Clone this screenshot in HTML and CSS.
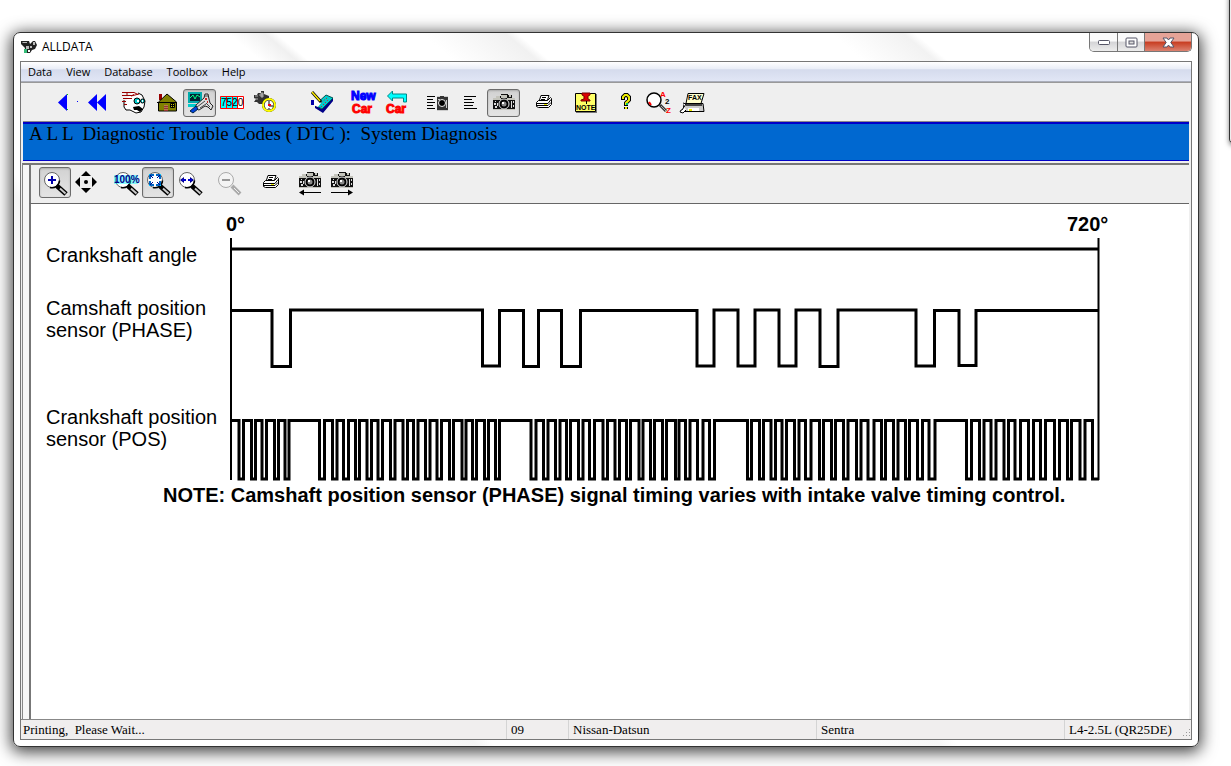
FILE: index.html
```html
<!DOCTYPE html>
<html lang="en">
<head>
<meta charset="utf-8">
<title>ALLDATA</title>
<link rel="stylesheet" href="styles.css">
</head>
<body>
<svg class="defs" aria-hidden="true">
  <defs>
    <g id="lens">
      <path d="M14 15L23 23" stroke="#000" stroke-width="5"/>
      <path d="M17 17.500L22.500 22.500" stroke="#ccc" stroke-width="2"/>
      <circle cx="9" cy="9" r="7.500" fill="#fff" stroke="#666"/>
      <path d="M7 16.500a7.500 7.500 0 0 0 9.500 -7" fill="none" stroke="#000" stroke-width="1.500"/>
    </g>
    <g id="camera">
      <path d="M1 5h4V3h4V1h7v1h4v3h3v12H1z" fill="#111"/>
      <path d="M1 5h8v2H1zM15 5h8v2h-8zM9 2h6v3H9zM17 2h2v2h-2zM4 3h4v2H4zM1 16h22v1H1z" fill="#c4c4bc"/>
      <path d="M3 8h1v1H3zM2 10h2v2H2zM5 10h1v3H5zM3 13h2v2H3zM19 8h1v7h-1zM21 8h1v2h-1zM21 12h1v2h-1z" fill="#ddd"/>
      <circle cx="12" cy="11" r="5" fill="#000" stroke="#e4e4e4"/>
      <circle cx="12" cy="11" r="2.500" fill="#888"/>
      <path d="M10 9h2v2h-2z" fill="#fff"/>
    </g>
    <g id="printer">
      <path d="M6 1.500h8l-2 6H4z" fill="#fff" stroke="#000"/>
      <path d="M7 3.500h4M6 5.500h4" stroke="#000"/>
      <path d="M1.500 8.500l2-2h9l3-3 1 1v6l-3 3h-10l-2-1z" fill="#fff" stroke="#000"/>
      <path d="M1 9.500h12l3-4M2 11.500h11l3-3" stroke="#000" fill="none"/>
      <path d="M9 10h3v1H9z" fill="#ee0"/>
    </g>
  </defs>
</svg>

<main class="window">
  <header class="titlebar">
    <svg class="appicon" viewBox="0 0 16 14" aria-hidden="true">
      <path d="M0 1h8l1 3 3-3h2l2 4-2 4-3 1-2 3H3L4 8 0 4z" fill="#222"/>
      <path d="M1 2h5v1H2zM12 2h2v3h-2zM5 6h3v3H5zM9 6h2v2H9z" fill="#bbb"/>
      <path d="M3 9h3v4H3z" fill="#3b7"/><path d="M7 10h2v2H7z" fill="#fff"/>
    </svg>
    <h1 class="title">ALLDATA</h1>
    <div class="caption">
      <button class="cap cap-min" aria-label="Minimize"><svg width="14" height="7" viewBox="0 0 14 7"><rect x="1.500" y="1.500" width="11" height="4" rx="1" fill="#fff" stroke="#556"/></svg></button>
      <button class="cap cap-max" aria-label="Maximize"><svg width="13" height="11" viewBox="0 0 13 11"><rect x="1" y="1" width="11" height="9" rx="1" fill="#fff" stroke="#556"/><rect x="4" y="4" width="5" height="3" fill="#ddd" stroke="#556"/></svg></button>
      <button class="cap cap-close" aria-label="Close"><svg width="13" height="11" viewBox="0 0 13 11"><path d="M1 1h4l1.500 2L8 1h4L8.800 5.500 12 10H8L6.500 8 5 10H1l3.200-4.500z" fill="#fff" stroke="#545468"/></svg></button>
    </div>
  </header>

  <div class="frame">
    <nav class="menu">
      <button>Data</button><button>View</button><button>Database</button><button>Toolbox</button><button>Help</button>
    </nav>

    <div class="toolbar" role="toolbar" aria-label="Main">
      <div class="group">
        <button class="tool" aria-label="Back"><svg viewBox="0 0 28 24"><path d="M17 3v17L8 11.500z" fill="#00f"/><path d="M17 3h1v1h-1zM17 18h1v1h-1z" fill="#0c0"/><path d="M27 10h1v1h-1z" fill="#00f"/></svg></button>
        <button class="tool" aria-label="Back to start"><svg viewBox="0 0 28 24"><path d="M14 3v17L5 11.500zM23 3v17l-9-8.500z" fill="#00f"/></svg></button>
      </div>
      <div class="group near">
        <button class="tool" aria-label="Customer"><svg viewBox="0 0 28 24">
          <path d="M7 7L12 2h7l4 3 2 5-1 7-3 5-6 1-6-3-4-3z" fill="#fff"/>
          <path d="M18 2l4 2 3 6-1 6-3 5-5 1-6-3H6l-2-3V9" fill="none" stroke="#000"/>
          <path d="M2 1.500h12l4 2M2 4.500h10l2-1M3 7.500h9M2 10.500h4M4 13.500h3M7 2v3M11 5l8-2" fill="none" stroke="#900"/>
          <circle cx="17" cy="10" r="3" fill="#0cc" stroke="#000"/><circle cx="22.500" cy="10" r="2" fill="#0cc" stroke="#000"/>
          <path d="M17 9h2v2h-2zM22 9h1v2h-1z" fill="#fff"/><path d="M13 16l6-1 4 3-3 3-3-2h-3z"/>
        </svg></button>
        <button class="tool" aria-label="Home"><svg viewBox="0 0 28 24">
          <path d="M6 3h3v6H6z" fill="#900"/><path d="M5.500 11L14 3l9.500 8v9h-18z" fill="#808000" stroke="#000"/><path d="M4 11.500h20" stroke="#000"/>
          <path d="M17.500 12.500h4v4h-4zM19.500 12v4M17 14.500h5" fill="#cc0" stroke="#000"/><path d="M11 14h4v6h-4z" fill="#933"/><path d="M12 14v6M14 14v6" stroke="#cc6" stroke-dasharray="1 1"/>
        </svg></button>
        <button class="tool pressed" aria-label="Diagnostics" aria-pressed="true"><svg viewBox="0 0 28 24">
          <path d="M2 1h14v11H2z" fill="#0aa"/><path d="M4 3h10v7H4z" fill="#023"/><path d="M4 7l3-3 2 4 2-4 3 2" fill="none" stroke="#0f8"/><path d="M2 13h9v3H2z" fill="#0cc"/>
          <path d="M10 14l8-7 1-4h3l1 5 1 4 3 3-2 4-3-3-3-1-6 4-3-1z" fill="#ddd" stroke="#222"/><path d="M11 16l8-6M20 12l4 4M19 5h3M14 17l6-4" stroke="#444"/><path d="M4 20l6-5 2 3-5 4z" fill="#04d" stroke="#024"/><path d="M19 7h2v2h-2zM21 10h1v2h-1z" fill="#c22"/>
        </svg></button>
        <button class="tool" aria-label="Mileage"><svg viewBox="0 0 28 24">
          <path d="M2 5h17v13H2z" fill="#0ff"/><path d="M19 5h5v13h-5z" fill="#fff"/><path d="M1.500 5.500h23v12h-23zM7.500 5v13M13.500 5v13M18.500 5v13" fill="none" stroke="#f00"/>
          <text class="odo" x="2" y="15">7520</text>
        </svg></button>
        <button class="tool" aria-label="Labor times"><svg viewBox="0 0 28 24">
          <path d="M2 4h3l1-2h3V0h3v3l5 2v4l-3 4H7l-2-2H2l2-3-2-1z" fill="#333"/><path d="M3 5h3M7 4h4M3 8h3M9 2h2v4H9z" stroke="#aaa" fill="#888"/>
          <circle cx="17" cy="14" r="7" fill="#000"/><circle cx="17" cy="14" r="6" fill="none" stroke="#ff0" stroke-width="2"/><circle cx="17" cy="14" r="4.500" fill="#fff"/>
          <path d="M17 10v5h4M17 17v1" fill="none" stroke="#000"/><path d="M16 13h3v2h-3z" fill="#f00"/>
        </svg></button>
      </div>
      <div class="group far">
        <button class="tool" aria-label="Estimate"><svg viewBox="0 0 28 24">
          <path d="M6 14l7 4L24 7v3L14 22l-8-5z" fill="#008"/><path d="M6 14L17 4l7 3-11 11z" fill="#0cc" stroke="#055"/>
          <path d="M10 13l8-6M12 16l8-8" stroke="#f00" stroke-dasharray="1 2"/>
          <path d="M4 9l5-1 3 4-3 4-5-2z" fill="#fff"/><path d="M2 9h3v5H2z" fill="#00a"/>
          <path d="M3 1l9 10" stroke="#000" stroke-width="3"/><path d="M3 1l8 9" stroke="#fe0" stroke-width="1.500"/>
        </svg></button>
      </div>
      <div class="group">
        <button class="tool" aria-label="New car"><svg viewBox="0 0 28 24"><text class="car blue" x="1" y="9">New</text><text class="car red" x="2" y="22">Car</text></svg></button>
        <button class="tool" aria-label="Previous car"><svg viewBox="0 0 28 24"><path d="M4.500 5l5-5v3h14v8h-3V7h-11v3z" fill="#0ff" stroke="#088"/><text class="car red" x="3" y="22">Car</text></svg></button>
      </div>
      <div class="group">
        <button class="tool" aria-label="Text and pictures"><svg viewBox="0 0 28 24"><path d="M3 5.500h8M3 8.500h6M3 11.500h8M3 14.500h6M3 17.500h8" stroke="#000"/><path d="M13 5h11v15H13z" fill="#333"/><path d="M13 5.500h3M20 5.500h4M13 19.500h11M14 8.500h2M22.500 9v8" stroke="#ccc"/><circle cx="18" cy="12" r="3.500" stroke="#eee"/></svg></button>
        <button class="tool" aria-label="Text only"><svg viewBox="0 0 28 24"><path d="M7 5.500h12M7 8.500h8M7 11.500h10M7 14.500h9M7 17.500h13" stroke="#000"/></svg></button>
        <button class="tool pressed" aria-label="Pictures only" aria-pressed="true"><svg viewBox="0 0 28 24"><use href="#camera" x="2" y="2"/></svg></button>
      </div>
      <div class="group">
        <button class="tool" aria-label="Print"><svg viewBox="0 0 28 24"><use href="#printer" x="4" y="3"/></svg></button>
      </div>
      <div class="group">
        <button class="tool" aria-label="Note"><svg viewBox="0 0 28 24"><path d="M4 3h21v19H4z" fill="#777"/><path d="M3.500 2.500h20v18h-20z" fill="#ff6" stroke="#000"/><path d="M10 2h8v2l-2 1v3l2 1v1H9V9l3-1V5l-2-1z" fill="#d00" stroke="#700"/><path d="M14.500 10v3" stroke="#000"/><text class="note" x="4" y="19">NOTE</text></svg></button>
      </div>
      <div class="group">
        <button class="tool" aria-label="Help"><svg viewBox="0 0 28 24"><path d="M10 9V6l2-2h2l2 2v3l-3 3v3M13 16v2" fill="none" stroke="#000" stroke-width="4"/><path d="M10 8V6l2-2h2l2 2v3l-3 3v2M13 16v2" fill="none" stroke="#ee0" stroke-width="2"/><path d="M13 12h2v2h-2z" fill="#0c6"/></svg></button>
        <button class="tool" aria-label="Search index"><svg viewBox="0 0 28 24"><path d="M14 14l6 6" stroke="#333" stroke-width="3"/><path d="M15 15l5 5" stroke="#aaa"/><circle cx="8" cy="9" r="7" fill="#fff" stroke="#000" stroke-width="1.500"/><path d="M3 11l2 3" stroke="#f00" stroke-width="2"/><text class="az red" x="14" y="6">A</text><text class="az" x="19" y="13">2</text><text class="az red" x="20" y="22">Z</text></svg></button>
        <button class="tool" aria-label="Fax"><svg viewBox="0 0 28 24"><path d="M9 2.500h16l-3 10H7z" fill="#ffc" stroke="#000"/><text class="fax" x="9" y="9">FAX</text><path d="M5 12.500h19l1 8H4z" fill="#ccc" stroke="#000"/><path d="M7 13h16v2H7z" fill="#444"/><path d="M9 17h11v3H9z" fill="#fff"/><path d="M10 18h3v2h-3z" fill="#ee0"/><path d="M4 12l3 1-4 6H2l-1 2 3 1 3-3" fill="#fff" stroke="#000"/></svg></button>
      </div>
    </div>

    <h2 class="banner">A L L  Diagnostic Trouble Codes ( DTC ):  System Diagnosis</h2>

    <section class="pane">
      <div class="toolbar sub" role="toolbar" aria-label="Picture">
        <div class="group">
          <button class="tool pressed" aria-label="Zoom in" aria-pressed="true"><svg viewBox="0 0 28 24"><g transform="translate(2 0)"><use href="#lens"/><path d="M9 5v8M5 9h8" stroke="#00a" stroke-width="2"/></g></svg></button>
          <button class="tool" aria-label="Pan"><svg viewBox="0 0 28 24"><path d="M13 0l5 5H8zM13 22l5-5H8zM2 11l5-5v10zM24 11l-5-5v10z"/><circle cx="13" cy="11" r="2"/></svg></button>
        </div>
        <div class="group">
          <button class="tool" aria-label="Full size"><svg viewBox="0 0 28 24"><g transform="translate(2 0)"><use href="#lens"/></g><path d="M2 4h24v9H2z" fill="#0ff" opacity=".45"/><text class="pct" x="2" y="12">100%</text></svg></button>
          <button class="tool pressed" aria-label="Fit to window" aria-pressed="true"><svg viewBox="0 0 28 24"><g transform="translate(2 0)"><use href="#lens"/><path d="M4 8V4h4M10 4h4v4M14 10v4h-4M8 14H4v-4" fill="none" stroke="#0cf" stroke-width="2"/><path d="M4 8V4h4M10 4h4v4M14 10v4h-4M8 14H4v-4M4 4l3 3M14 4l-3 3M14 14l-3-3M4 14l3-3" fill="none" stroke="#008"/></g></svg></button>
          <button class="tool" aria-label="Fit to width"><svg viewBox="0 0 28 24"><g transform="translate(2 0)"><use href="#lens"/><path d="M2 9l4-3v6zM16 9l-4-3v6z" fill="#008"/><path d="M4 9h4M10 9h4" stroke="#00c" stroke-width="2"/></g></svg></button>
        </div>
        <div class="group">
          <button class="tool" aria-label="Zoom out" disabled><svg viewBox="0 0 28 24"><path d="M17 15l8 8" stroke="#aaa" stroke-width="4"/><path d="M19 17l5 5" stroke="#eee"/><circle cx="11" cy="9" r="7.500" fill="#f4f4f4" stroke="#aaa"/><path d="M7 9h8" stroke="#999" stroke-width="2"/></svg></button>
        </div>
        <div class="group wide">
          <button class="tool" aria-label="Print picture"><svg viewBox="0 0 28 24"><use href="#printer" x="5" y="3"/></svg></button>
        </div>
        <div class="group">
          <button class="tool" aria-label="Previous picture"><svg viewBox="0 0 28 24"><use href="#camera" x="2" y="0"/><path d="M8 21.500h17" stroke="#000"/><path d="M3 21.500l5-3v6z"/></svg></button>
          <button class="tool" aria-label="Next picture"><svg viewBox="0 0 28 24"><use href="#camera" x="2" y="0"/><path d="M3 21.500h17" stroke="#000"/><path d="M25 21.500l-5-3v6z"/></svg></button>
        </div>
      </div>

      <div class="view">
        <svg class="chart" viewBox="31 204 1158 513" role="img" aria-label="Crankshaft and camshaft sensor signals">
          <text class="label bold" x="226" y="231">0°</text>
          <text class="label bold" x="1067" y="231">720°</text>
          <text class="label" x="46" y="262">Crankshaft angle</text>
          <text class="label" x="46" y="315">Camshaft position</text>
          <text class="label" x="46" y="337">sensor (PHASE)</text>
          <text class="label" x="46" y="424">Crankshaft position</text>
          <text class="label" x="46" y="446">sensor (POS)</text>
          <text class="label bold" x="163" y="502">NOTE: Camshaft position sensor (PHASE) signal timing varies with intake valve timing control.</text>
          <path class="axis" d="M231 238V480M1098.500 238V480"/>
          <path class="wave" d="M231 249H1098"/>
          <path class="wave" d="M231 310.500H272V366.500H290.500V310H482.500V366H499.500V310.500H523.500V366.500H538.500V310.500H561.500V366.500H580.500V310.500H697V366H714V310H738V366H755V310H779V366H796V310H820V366.500H838V310H916V366H934.500V310.500H959V365.500H976V310.500H1098"/>
          <path class="wave" d="M231 420.500H239V479H243.500V420.500H251.500V479H255.500V420.500H262V479H266.500V420.500H274.500V479H278.500V420.500H285V479H289V420.500H319.500V479H324.500V420.500H332.500V479H337V420.500H343.500V479H348.500V420.500H355.500V479H359.500V420.500H367V479H371.500V420.500H378V479H382.500V420.500H390.500V479H395V420.500H403V479H407.500V420.500H413.500V479H418V420.500H425.500V479H430V420.500H437V479H441.500V420.500H449.500V479H453.500V420.500H462V479H466V420.500H472.500V479H476.500V420.500H484.500V479H488.500V420.500H495.500V479H499.500V420.500H531V479H536V420.500H543.500V479H548V420.500H555.500V479H560V420.500H566.500V479H570.500V420.500H578.500V479H583V420.500H589.500V479H594.500V420.500H603V479H607.500V420.500H615V479H619.500V420.500H626.500V479H630.500V420.500H639V479H643V420.500H650.500V479H654.500V420.500H662.500V479H666.500V420.500H675.500V479H679V420.500H685.500V479H690V420.500H697.500V479H703V420.500H709.500V479H714.500V420.500H747.500V479H751.500V420.500H759.500V479H763.500V420.500H771V479H775.500V420.500H782V479H786.500V420.500H794.500V479H799V420.500H805.500V479H811V420.500H819.500V479H823.500V420.500H831.500V479H835.500V420.500H843.500V479H848V420.500H856.500V479H861V420.500H868V479H874V420.500H881.500V479H885.500V420.500H893.500V479H898V420.500H905.500V479H909.500V420.500H917.500V479H922.500V420.500H929V479H935V420.500H966.500V479H971.500V420.500H979.500V479H984V420.500H991V479H996V420.500H1004V479H1008.500V420.500H1015V479H1020.500V420.500H1028.500V479H1033.500V420.500H1040.500V479H1045.500V420.500H1054.500V479H1059.500V420.500H1067.500V479H1071.500V420.500H1080V479H1085V420.500H1092.500V479H1099"/>
        </svg>
      </div>
    </section>

    <footer class="status">
      <span>Printing,  Please Wait...</span><span>09</span><span>Nissan-Datsun</span><span>Sentra</span><span>L4-2.5L (QR25DE)</span>
      <svg class="grip" viewBox="0 0 10 10" aria-hidden="true"><path d="M8 1h1v1H8zM5 4h1v1H5zM8 4h1v1H8zM2 7h1v1H2zM5 7h1v1H5zM8 7h1v1H8z" fill="#999"/></svg>
    </footer>
  </div>
</main>
<div class="neighbor" aria-hidden="true"></div>
</body>
</html>
```

FILE: styles.css
```css
* { box-sizing: border-box; }

body {
  margin: 0;
  min-height: 100vh;
  padding: 32px 32px 19px 13px;
  display: flex;
  position: relative;
  overflow: hidden;
  background: #fff;
  font-family: "Open Sans", "Noto Sans", sans-serif;
  font-size: 12px;
  color: #000;
}

.defs { position: absolute; width: 0; height: 0; }

button {
  margin: 0;
  padding: 0;
  border: 0;
  background: none;
  font: inherit;
  color: inherit;
}

.window {
  flex: 1;
  min-width: 0;
  display: flex;
  flex-direction: column;
  padding: 0 6px 6px;
  border: 1px solid #333;
  border-radius: 7px;
  background: linear-gradient(50deg, #fff 0 20%, #f5f5f5 26%, #fff 27% 45%, #f7f7f7 52%, #fff 53%);
  box-shadow: 0 3px 16px 2px rgba(0, 0, 0, .75);
}

.titlebar {
  display: flex;
  align-items: center;
  height: 28px;
  padding-left: 1px;
  background: linear-gradient(40deg, #fff 0 20%, #f0f0f0 23%, #fff 24% 36%, #f1f1f1 43%, #fff 44% 70%, #f2f2f2 76%, #fff 77%);
}
.appicon { width: 16px; height: 14px; margin-right: 5px; }
.title { margin: 0; font-size: 12px; font-weight: 400; line-height: 16px; }

.caption {
  display: flex;
  align-self: flex-start;
  margin-left: auto;
  border: 1px solid #777;
  border-top: 0;
  border-radius: 0 0 5px 5px;
  overflow: hidden;
}
.cap {
  display: grid;
  place-items: center;
  width: 27px;
  height: 18px;
  background: linear-gradient(#fafafa 45%, #d4d4d6 50%, #ededed);
}
.cap + .cap { border-left: 1px solid #777; }
.cap-close { width: 47px; background: linear-gradient(#e5a397 45%, #c83c20 50%, #dc8270); }

.frame {
  flex: 1;
  display: flex;
  flex-direction: column;
  border: 1px solid #777;
  background: #efefef;
}

.menu {
  display: flex;
  gap: 14px;
  height: 20px;
  padding-left: 7px;
  border-bottom: 1px solid #aaaebb;
  background: linear-gradient(#fff, #e9edf7 38%, #d5dbed 40%, #e1e6f5);
  font-size: 11px;
}

.toolbar {
  display: flex;
  align-items: center;
  gap: 8px;
  height: 40px;
  padding-left: 26px;
  border-top: 1px solid #999;
  background: #efefef;
}
.group { display: flex; }
.near { margin-left: -4px; }
.far { margin-left: 16px; }

.tool {
  display: grid;
  place-items: center;
  width: 33px;
  height: 28px;
  border: 1px solid transparent;
  border-radius: 3px;
}
.tool svg { width: 28px; height: 24px; overflow: visible; }
.pressed {
  border-color: #6c6c6c;
  background: linear-gradient(#d2d2d2, #e4e4e4);
  box-shadow: inset 0 1px 2px #aaa;
}

.odo { font: 10px "Liberation Sans", sans-serif; }
.car { font: bold 12px "Liberation Sans", sans-serif; stroke-width: 1px; }
.blue { fill: #00f; stroke: #00f; }
.red { fill: #f00; stroke: #f00; }
.note { font: bold 7px "Liberation Sans", sans-serif; }
.az { font: bold 8px "Liberation Sans", sans-serif; stroke-width: 0; }
.fax { font: bold 7px "Liberation Sans", sans-serif; }
.pct { font: bold 10px "Liberation Sans", sans-serif; fill: #008; }

.banner {
  height: 39px;
  margin: 0 2px;
  padding-left: 6px;
  border-top: 2px solid #0000c8;
  border-bottom: 1px solid #0000c8;
  box-shadow: 0 -1px #888;
  background: #0068d0;
  font: 19px/19px "Liberation Serif", serif;
  white-space: pre;
}

.pane {
  flex: 1;
  display: flex;
  flex-direction: column;
  margin: 2px 2px 0 1px;
  padding-left: 6px;
  border-left: 1px solid #888;
  border-top: 2px solid #777;
  background: #f7f7f7;
}
.sub {
  align-items: flex-start;
  gap: 7px;
  height: 39px;
  padding: 2px 0 0 8px;
  border-top: 0;
  border-bottom: 1px solid #666;
  border-left: 2px solid #777;
}
.sub .tool { width: 32px; height: 31px; }
.wide { margin-left: 3px; }

.view {
  flex: 1;
  border-left: 2px solid #777;
  background: #fff;
}
.chart { display: block; width: 100%; height: auto; }
.label { font: 20px "Liberation Sans", sans-serif; }
.bold { font-weight: 700; }
.axis { fill: none; stroke: #000; stroke-width: 2px; }
.wave { fill: none; stroke: #000; stroke-width: 3px; }

.status {
  position: relative;
  display: grid;
  grid-template-columns: 485px 62px 248px 248px 1fr;
  height: 20px;
  border-top: 1px solid #888;
  background: #f0eeee;
  font: 13px/19px "Liberation Serif", serif;
  white-space: pre;
}
.status span { padding-left: 4px; }
.status span:first-child { padding-left: 2px; }
.status span + span { border-left: 1px solid #d4d4d4; }
.grip { position: absolute; right: 0; bottom: 1px; width: 10px; height: 10px; }

.neighbor {
  position: absolute;
  top: -8px;
  right: -8px;
  width: 10px;
  height: 152px;
  border: 1px solid #333;
  border-radius: 5px;
  background: #eee;
  box-shadow: 0 2px 5px rgba(0, 0, 0, .5);
}
```
